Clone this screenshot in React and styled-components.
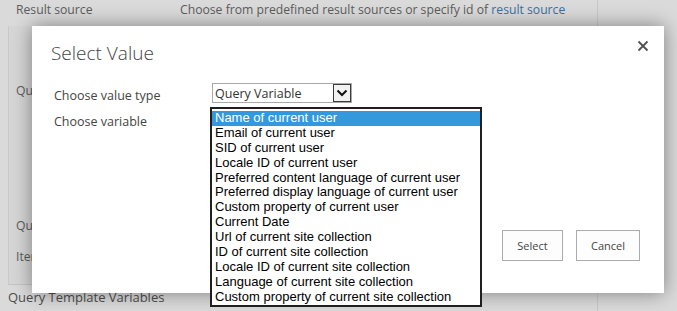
import React from "react";
import styled, { createGlobalStyle } from "styled-components";

const Global = createGlobalStyle`
  html, body { margin: 0; padding: 0; }
  body {
    width: 677px; height: 311px; overflow: hidden;
    background: #dadada;
    font-family: "Open Sans", "Noto Sans", sans-serif;
  }
  #root { position: relative; width: 677px; height: 311px; }
`;

const Page = styled.div`
  position: relative;
  width: 677px;
  height: 311px;
  display: flex;
  flex-direction: column;
  color: #5c5c5c;
  font-size: 12.2px;
`;

const TopRow = styled.div`
  display: flex;
  height: 26px;
  padding-left: 16px;
  align-items: flex-start;
  line-height: 20px;
`;

const TopLabel = styled.div`
  width: 164px;
  flex: none;
`;

const TopDesc = styled.div`
  flex: none;
  width: 417px;
  border-right: 1px solid #c8c8c8;
  height: 26px;
`;

const Link = styled.span`
  color: #3c6f9c;
`;

const Panel = styled.div`
  margin-left: 8px;
  width: 589px;
  height: 259px;
  border-left: 1px solid #c9c9c9;
  border-bottom: 1px solid #c4c4c4;
  border-right: 1px solid #c8c8c8;
  background: #d6d6d6;
  display: flex;
  flex-direction: column;
  padding-left: 7px;
  box-sizing: border-box;
`;

const PanelLabel = styled.div`
  box-sizing: border-box;
  height: ${(p) => p.$h}px;
  line-height: 20px;
  white-space: nowrap;
  padding-top: ${(p) => p.$pt || 0}px;
`;

const SectionHead = styled.div`
  display: flex;
  height: 26px;
  font-size: 13px;
  color: #4d4d4d;
`;

const SectionTitle = styled.div`
  width: 589px;
  padding-left: 8px;
  border-right: 1px solid #c8c8c8;
  line-height: 24px;
`;

const Dialog = styled.div`
  position: absolute;
  left: 32px;
  top: 26px;
  width: 632px;
  height: 267px;
  background: #fff;
  box-shadow: 0 0 18px rgba(0, 0, 0, 0.42);
  display: flex;
  flex-direction: column;
  box-sizing: border-box;
  padding: 0 24px 32px 19px;
`;

const Header = styled.div`
  display: flex;
  justify-content: space-between;
  align-items: flex-start;
  padding-top: 13px;
  height: 46px;
  box-sizing: border-box;
`;

const Title = styled.h1`
  margin: 0;
  font-weight: 300;
  font-size: 19px;
  line-height: 28px;
  color: #444;
`;

const Close = styled.button`
  border: 0;
  background: transparent;
  padding: 0;
  margin: 1px -9px 0 0;
  width: 12px;
  height: 12px;
  display: flex;
  cursor: pointer;
`;

const Form = styled.div`
  display: grid;
  grid-template-columns: 158px 1fr;
  grid-auto-rows: 27px;
  padding-left: 3px;
  padding-top: 11px;
`;

const Label = styled.div`
  font-size: 12.5px;
  color: #444;
  line-height: 20px;
  padding-top: ${(p) => p.$pt || 0}px;
`;

const Control = styled.div`
  position: relative;
`;

const SelectBox = styled.div`
  width: 140px;
  height: 20px;
  box-sizing: border-box;
  border: 1px solid #a9a9a9;
  display: flex;
  align-items: center;
  justify-content: space-between;
  padding-left: 2px;
  font-size: 12.5px;
  color: #333;
`;

const Arrow = styled.div`
  width: 18px;
  height: 18px;
  box-sizing: border-box;
  border: 1px solid #3a3a3a;
  background: #f2f2f2;
  display: flex;
  align-items: center;
  justify-content: center;
`;

const ListBox = styled.ul`
  position: absolute;
  left: -2px;
  top: 24px;
  width: 272px;
  height: 200px;
  margin: 0;
  padding: 2px 0 0 0;
  list-style: none;
  box-sizing: border-box;
  border: 2px solid #1f1f1f;
  background: #fff;
  z-index: 2;
  overflow: hidden;
`;

const Option = styled.li`
  font-family: "Liberation Sans", Arial, sans-serif;
  font-size: 13px;
  line-height: 14.9px;
  height: 14.9px;
  padding-left: 3px;
  color: ${(p) => (p.$selected ? "#fff" : "#000")};
  background: ${(p) => (p.$selected ? "#3399dc" : "transparent")};
  white-space: nowrap;
`;

const Spacer = styled.div`
  flex: 1;
`;

const Footer = styled.div`
  display: flex;
  justify-content: flex-end;
  gap: 13px;
`;

const Button = styled.button`
  width: ${(p) => p.$w}px;
  height: 31px;
  border: 1px solid #ababab;
  background: #fdfdfd;
  font-family: "Open Sans", "Noto Sans", sans-serif;
  font-size: 11px;
  color: #444;
  padding: 0;
`;

const options = [
  "Name of current user",
  "Email of current user",
  "SID of current user",
  "Locale ID of current user",
  "Preferred content language of current user",
  "Preferred display language of current user",
  "Custom property of current user",
  "Current Date",
  "Url of current site collection",
  "ID of current site collection",
  "Locale ID of current site collection",
  "Language of current site collection",
  "Custom property of current site collection",
];

export default function App() {
  return (
    <>
      <Global />
      <Page>
        <TopRow>
          <TopLabel>Result source</TopLabel>
          <TopDesc>
            Choose from predefined result sources or specify id of{" "}
            <Link>result source</Link>
          </TopDesc>
        </TopRow>
        <Panel>
          <PanelLabel $h={190} $pt={55}>Query transform</PanelLabel>
          <PanelLabel $h={31}>Query template</PanelLabel>
          <PanelLabel $h={30}>Item display template</PanelLabel>
        </Panel>
        <SectionHead>
          <SectionTitle>Query Template Variables</SectionTitle>
        </SectionHead>

        <Dialog>
          <Header>
            <Title>Select Value</Title>
            <Close aria-label="Close">
              <svg width="12" height="12" viewBox="0 0 12 12">
                <path d="M1.5 1.5 L10.5 10.5 M10.5 1.5 L1.5 10.5" stroke="#505050" strokeWidth="1.8" />
              </svg>
            </Close>
          </Header>
          <Form>
            <Label $pt={3}>Choose value type</Label>
            <Control>
              <SelectBox>
                <span>Query Variable</span>
                <Arrow>
                  <svg width="12" height="8" viewBox="0 0 12 8">
                    <path d="M1.5 1.5 L6 6 L10.5 1.5" fill="none" stroke="#111" strokeWidth="2" />
                  </svg>
                </Arrow>
              </SelectBox>
              <ListBox>
                {options.map((o, i) => (
                  <Option key={o} $selected={i === 0}>{o}</Option>
                ))}
              </ListBox>
            </Control>
            <Label $pt={2}>Choose variable</Label>
            <div />
          </Form>
          <Spacer />
          <Footer>
            <Button $w={61}>Select</Button>
            <Button $w={64}>Cancel</Button>
          </Footer>
        </Dialog>
      </Page>
    </>
  );
}
